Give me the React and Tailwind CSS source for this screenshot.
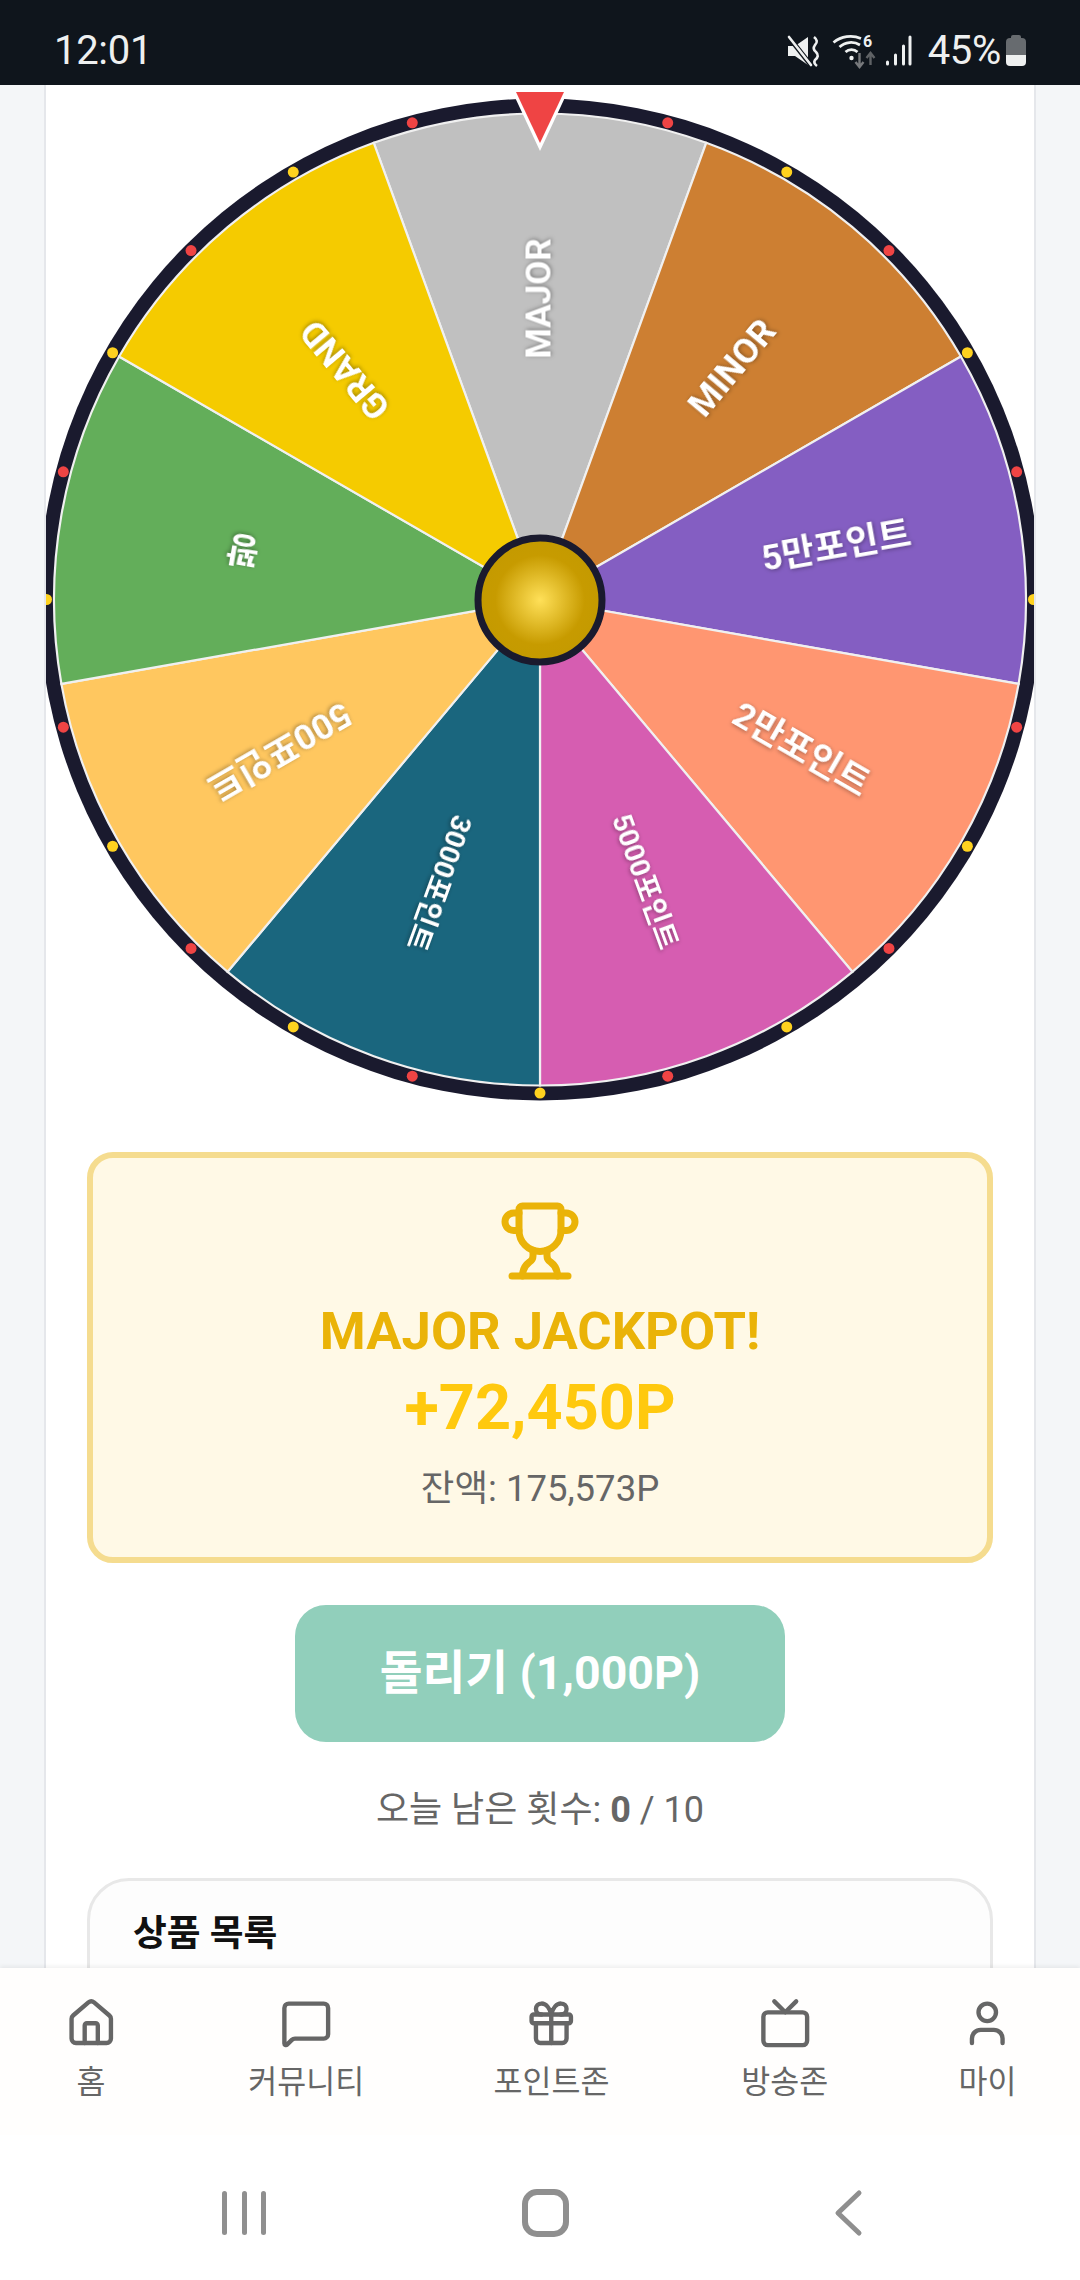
import React from "react";
import { House, MessageSquare, Gift, Tv, User, Trophy } from "lucide-react";

const FONT = "font-['Roboto','Noto_Sans_CJK_KR',sans-serif]";
const CX = 501;
const CY = 514.5;
const R = 486;

const segs = [
  { a: 0, c: "#C0C0C0", t: "MAJOR", s: 35 },
  { a: 40, c: "#CD7F32", t: "MINOR", s: 35.5 },
  { a: 80, c: "#845EC2", t: "5만포인트", s: 35.5 },
  { a: 120, c: "#FF9671", t: "2만포인트", s: 35.5 },
  { a: 160, c: "#D65DB1", t: "5000포인트", s: 28 },
  { a: 200, c: "#1A667E", t: "3000포인트", s: 28 },
  { a: 240, c: "#FFC75F", t: "500포인트", s: 35.5 },
  { a: 280, c: "#63AE5A", t: "꽝", s: 35 },
  { a: 320, c: "#F5CB00", t: "GRAND", s: 35 },
];

const pt = (deg, r) => {
  const rad = (deg * Math.PI) / 180;
  return [CX + r * Math.sin(rad), CY - r * Math.cos(rad)];
};

function Wheel() {
  return (
    <svg width="1002" height="1016" viewBox="0 0 1002 1016" className="block shrink-0 blur-[0.6px]">
      <defs>
        <radialGradient id="hub" cx="50%" cy="50%" r="50%">
          <stop offset="0%" stopColor="#FFE058" />
          <stop offset="72%" stopColor="#C79B00" />
          <stop offset="100%" stopColor="#C49A00" />
        </radialGradient>
      </defs>
      <circle cx={CX} cy={CY} r={501} fill="#1A1A2E" />
      {segs.map((s) => {
        const [x1, y1] = pt(s.a - 20, R);
        const [x2, y2] = pt(s.a + 20, R);
        return (
          <path
            key={s.t}
            d={`M${CX} ${CY}L${x1} ${y1}A${R} ${R} 0 0 1 ${x2} ${y2}Z`}
            fill={s.c}
            stroke="#F0F0F0"
            strokeWidth="2.2"
          />
        );
      })}
      {Array.from({ length: 24 }).map((_, i) => {
        const [x, y] = pt(i * 15, 493.5);
        return <circle key={i} cx={x} cy={y} r="5.5" fill={i % 2 === 0 ? "#FFD21F" : "#EF4444"} />;
      })}
      {segs.map((s) => {
        const [x, y] = pt(s.a, 301);
        return (
          <text
            key={s.t}
            x={x}
            y={y - 1.5}
            fill="#fff"
            fontSize={s.s}
            fontWeight="700"
            textAnchor="middle"
            dominantBaseline="central"
            transform={`rotate(${s.a - 90} ${x} ${y})`}
            className="font-['Roboto','Noto_Sans_CJK_KR',sans-serif] drop-shadow-[1px_1px_2px_rgba(0,0,0,0.35)]"
          >
            {s.t}
          </text>
        );
      })}
      <circle cx={CX} cy={CY + 0.5} r="62" fill="url(#hub)" stroke="#1A1A2E" strokeWidth="7" />
      <polygon points="473,6 529,6 501,66" fill="#fff" />
      <polygon points="477,7 525,7 501,58" fill="#EF4444" />
    </svg>
  );
}

function StatusIcons() {
  return (
    <div className="flex items-start">
      <svg width="124" height="34" viewBox="0 0 124 34" className="block overflow-visible">
        <polygon points="0,12 7,12 20,3 20,31 7,22 0,22" fill="#EEF0F0" />
        <line x1="0" y1="2" x2="22" y2="30" stroke="#0F151C" strokeWidth="5" />
        <line x1="1" y1="3" x2="23" y2="31" stroke="#EEF0F0" strokeWidth="2.6" strokeLinecap="round" />
        <path d="M26 3 Q31 7 27 11 Q24 15 28 18 Q32 22 27 26 Q25 29 29 32" fill="none" stroke="#EEF0F0" strokeWidth="2.6" />
        <circle cx="63.5" cy="24" r="2.2" fill="#EEF0F0" />
        <path d="M57.5 18 A9 9 0 0 1 69.5 18" fill="none" stroke="#EEF0F0" strokeWidth="2.8" />
        <path d="M51.5 13 A17 17 0 0 1 72 11" fill="none" stroke="#EEF0F0" strokeWidth="2.8" />
        <path d="M45.5 8.5 A27 27 0 0 1 73 4.5" fill="none" stroke="#EEF0F0" strokeWidth="2.8" />
        <path d="M71.5 19 V32 M67.5 28 L71.5 33 L75.5 28" fill="none" stroke="#77797C" strokeWidth="2.4" />
        <path d="M82.5 31 V20 M78.5 24 L82.5 19 L86.5 24" fill="none" stroke="#5F6265" strokeWidth="2.4" />
        <g stroke="#EEF0F0" strokeWidth="3" strokeLinecap="round">
          <line x1="99.5" y1="28" x2="99.5" y2="30" />
          <line x1="107.5" y1="21" x2="107.5" y2="30" />
          <line x1="115.5" y1="12" x2="115.5" y2="30" />
          <line x1="122" y1="3" x2="122" y2="30" />
        </g>
        <text x="75" y="13" fill="#EEF0F0" fontSize="16" fontWeight="700" className={FONT}>6</text>
      </svg>
      <span className="ml-[16px] text-[40px] leading-[34px] text-[#EEF0F0] tracking-[-0.3px]">45%</span>
      <div className="ml-[5px] mt-[1px] flex w-[20px] flex-col items-center">
        <div className="h-[3px] w-[10px] rounded-t-[2px] bg-[#676B6F]" />
        <div className="h-[17px] w-[20px] rounded-t-[4px] bg-[#676B6F]" />
        <div className="h-[11px] w-[20px] rounded-b-[4px] bg-[#EEF0F0]" />
      </div>
    </div>
  );
}

function NavItem({ Icon, label, w }) {
  return (
    <div className={`flex flex-col items-center ${w}`}>
      <Icon size={52.5} strokeWidth={2} color="#666666" className="shrink-0" />
      <span className="mt-[11px] whitespace-nowrap text-[31.5px] leading-[44px] text-[#666]">{label}</span>
    </div>
  );
}

export default function App() {
  return (
    <div className={`flex h-[2280px] w-[1080px] flex-col overflow-hidden bg-white ${FONT}`}>
      <div className="flex h-[85px] shrink-0 items-start justify-between bg-[#0F151C] pl-[54px] pr-[54px] pt-[34px]">
        <span className="text-[40px] leading-[34px] tracking-[-0.3px] text-[#EEF0F0]">12:01</span>
        <StatusIcons />
      </div>

      <main className="min-h-0 flex-1 overflow-hidden bg-[#F4F6F8]">
        <div className="mx-[44px] h-full overflow-hidden border-x-2 border-[#E5E7EB] bg-white">
          <div className="flex justify-center">
            <Wheel />
          </div>

          <div className="mx-[41px] mt-[51px] flex h-[411px] flex-col items-center rounded-[26px] border-[6px] border-[#F5DC8F] bg-[#FFF9E6] pt-[41px]">
            <Trophy size={84} strokeWidth={2} color="#EAB308" />
            <div className="mt-[18px] text-[52.5px] font-bold leading-[60px] text-[#EAB308]">MAJOR JACKPOT!</div>
            <div className="mt-[11px] text-[63px] font-bold leading-[72px] text-[#FFC90E]">+72,450P</div>
            <div className="mt-[23px] text-[36.5px] leading-[44px] text-[#666]">잔액: 175,573P</div>
          </div>

          <div className="mt-[42px] flex justify-center">
            <button className="flex h-[137px] w-[490px] items-center justify-center rounded-[31px] bg-[#91CFBB] text-[46.5px] font-bold text-white">
              돌리기 (1,000P)
            </button>
          </div>

          <div className="mt-[46px] text-center text-[36px] leading-[44px] text-[#666]">
            오늘 남은 횟수: <b className="font-bold">0</b> / 10
          </div>

          <div className="mx-[41px] mt-[46px] h-[300px] rounded-[42px] border-[3px] border-[#E8E8E8] bg-[#FDFDFD] pl-[43px] pt-[31px]">
            <div className="text-[36.75px] font-bold leading-[44px] text-[#111]">상품 목록</div>
          </div>
        </div>
      </main>

      <nav className="flex h-[167px] shrink-0 justify-between bg-[#FFFEFD] pl-[66px] pr-[65px] pt-[29px] shadow-[0_-2px_4px_rgba(0,0,0,0.06)]">
        <NavItem Icon={House} label="홈" w="w-[50px]" />
        <NavItem Icon={MessageSquare} label="커뮤니티" w="w-[115px]" />
        <NavItem Icon={Gift} label="포인트존" w="w-[116px] -ml-[3px]" />
        <NavItem Icon={Tv} label="방송존" w="w-[85px]" />
        <NavItem Icon={User} label="마이" w="w-[55px]" />
      </nav>

      <div className="flex h-[145px] shrink-0 items-start bg-white pl-[222px] pt-[56px]">
        <div className="flex h-[44px] w-[44px] justify-between">
          <div className="h-full w-[5px] rounded-full bg-[#8F8F8F]" />
          <div className="h-full w-[5px] rounded-full bg-[#8F8F8F]" />
          <div className="h-full w-[5px] rounded-full bg-[#8F8F8F]" />
        </div>
        <div className="ml-[256px] -mt-[2px] h-[48px] w-[47px] rounded-[15px] border-[6px] border-[#8F8F8F]" />
        <svg width="30" height="48" viewBox="0 0 30 48" className="ml-[264px] -mt-[2px] block">
          <path d="M26 4 L5 24 L26 44" fill="none" stroke="#8F8F8F" strokeWidth="5" strokeLinecap="round" strokeLinejoin="round" />
        </svg>
      </div>
    </div>
  );
}
